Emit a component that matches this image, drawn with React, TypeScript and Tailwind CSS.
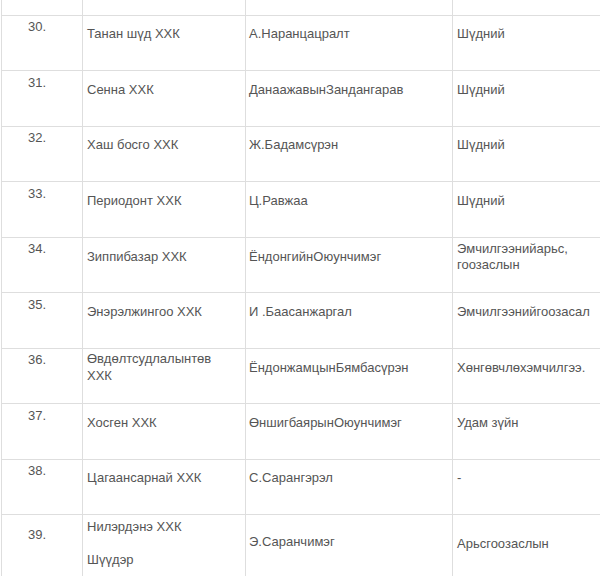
type Row = {
  no: string;
  company: string[];
  person: string;
  service: string;
  pt: { no: number; company: number; person: number; service: number };
};

const single = { no: 3.5, company: 10.5, person: 10.5, service: 10.5 };

const rows: Row[] = [
  { no: "30.", company: ["Танан шүд ХХК"], person: "А.Наранцацралт", service: "Шүдний", pt: single },
  { no: "31.", company: ["Сенна ХХК"], person: "ДанаажавынЗандангарав", service: "Шүдний", pt: single },
  { no: "32.", company: ["Хаш босго ХХК"], person: "Ж.Бадамсүрэн", service: "Шүдний", pt: single },
  { no: "33.", company: ["Периодонт ХХК"], person: "Ц.Равжаа", service: "Шүдний", pt: single },
  {
    no: "34.",
    company: ["Зиппибазар ХХК"],
    person: "ЁндонгийнОюунчимэг",
    service: "Эмчилгээнийарьс, гоозаслын",
    pt: { no: 3.5, company: 11.5, person: 11.5, service: 3 },
  },
  { no: "35.", company: ["Энэрэлжингоо ХХК"], person: "И .Баасанжаргал", service: "Эмчилгээнийгоозасал", pt: single },
  {
    no: "36.",
    company: ["Өвдөлтсудлалынтөв ХХК"],
    person: "ЁндонжамцынБямбасүрэн",
    service: "Хөнгөвчлөхэмчилгээ.",
    pt: { no: 3.5, company: 2.5, person: 11.5, service: 11.5 },
  },
  { no: "37.", company: ["Хосген ХХК"], person: "ӨншигбаярынОюунчимэг", service: "Удам зүйн", pt: single },
  { no: "38.", company: ["Цагаансарнай ХХК"], person: "С.Сарангэрэл", service: "-", pt: single },
  {
    no: "39.",
    company: ["Нилэрдэнэ ХХК", "Шүүдэр"],
    person: "Э.Саранчимэг",
    service: "Арьсгоозаслын",
    pt: { no: 11.5, company: 4, person: 19, service: 21 },
  },
];

function Cell({ className, pt, children }: { className: string; pt: number; children: React.ReactNode }) {
  return (
    <div className={"border-r border-[#dedede] shrink-0 " + className} style={{ paddingTop: pt }}>
      {children}
    </div>
  );
}

export default function App() {
  return (
    <div className="w-[600px] h-[576px] overflow-hidden bg-white">
      <div
        className="ml-[1px] w-[660px] border-l border-[#dedede] text-[13px] leading-[16.6px] text-[#555]"
        style={{ fontFamily: '"Liberation Sans", Arial, sans-serif' }}
      >
        <div className="flex h-[15.5px] border-b border-[#dedede]">
          <div className="w-[81px] border-r border-[#dedede]" />
          <div className="w-[163px] border-r border-[#dedede]" />
          <div className="w-[207px] border-r border-[#dedede]" />
        </div>
        {rows.map((r) => (
          <div key={r.no} className={r.no === "39." ? "flex h-[80px] border-b border-[#dedede]" : "flex h-[55.5px] border-b border-[#dedede]"}>
            <Cell className="w-[81px] pl-[26px]" pt={r.pt.no}>
              {r.no}
            </Cell>
            <Cell className="w-[163px] pl-[4px] pr-[6px]" pt={r.pt.company}>
              {r.company.map((c, i) => (
                <p key={c} className={i > 0 ? "mt-[16.9px]" : ""}>
                  {c}
                </p>
              ))}
            </Cell>
            <Cell className="w-[207px] pl-[3px] pr-[4px]" pt={r.pt.person}>
              {r.person}
            </Cell>
            <Cell className="w-[200px] pl-[4px] pr-[40px]" pt={r.pt.service}>
              {r.service}
            </Cell>
          </div>
        ))}
      </div>
    </div>
  );
}
